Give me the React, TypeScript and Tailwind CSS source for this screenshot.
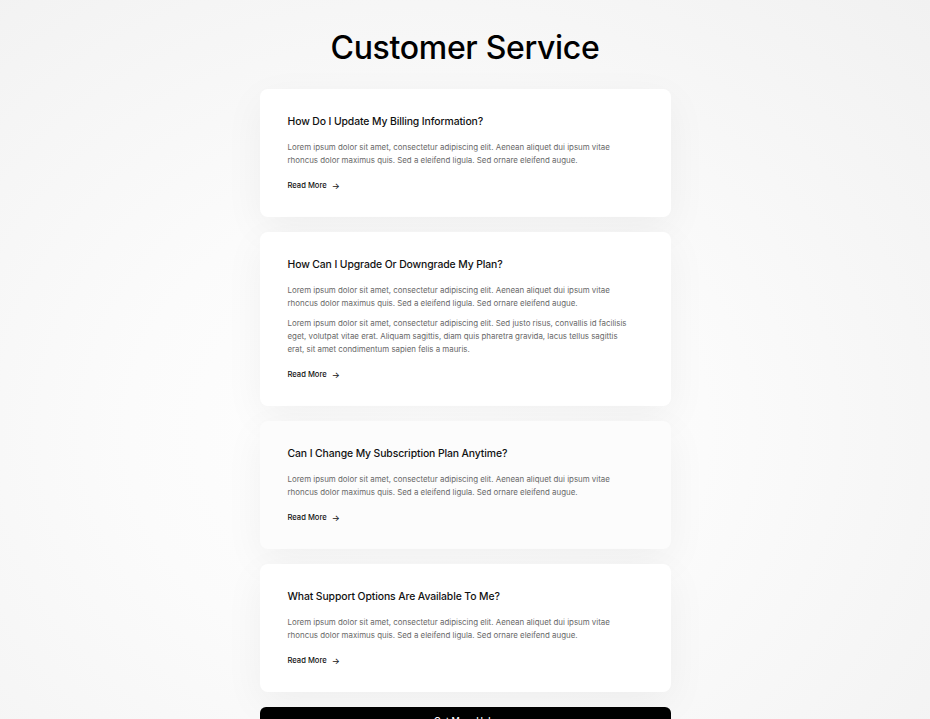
import React from 'react';

const p1 =
  'Lorem ipsum dolor sit amet, consectetur adipiscing elit. Aenean aliquet dui ipsum vitae rhoncus dolor maximus quis. Sed a eleifend ligula. Sed ornare eleifend augue.';
const p2 =
  'Lorem ipsum dolor sit amet, consectetur adipiscing elit. Sed justo risus, convallis id facilisis eget, volutpat vitae erat. Aliquam sagittis, diam quis pharetra gravida, lacus tellus sagittis erat, sit amet condimentum sapien felis a mauris.';

interface Faq {
  title: string;
  paragraphs: string[];
  faded?: boolean;
}

const faqs: Faq[] = [
  { title: 'How Do I Update My Billing Information?', paragraphs: [p1] },
  { title: 'How Can I Upgrade Or Downgrade My Plan?', paragraphs: [p1, p2] },
  { title: 'Can I Change My Subscription Plan Anytime?', paragraphs: [p1], faded: true },
  { title: 'What Support Options Are Available To Me?', paragraphs: [p1] },
];

const FaqCard: React.FC<{ faq: Faq }> = ({ faq }) => (
  <div
    className={`rounded-lg px-7 pt-[26px] pb-[25px] shadow-[0_12px_40px_rgba(0,0,0,0.05)] ${
      faq.faded ? 'bg-[#fcfcfc]' : 'bg-white'
    }`}
  >
    <h3 className="text-[10.4px] leading-[13px] font-medium text-[#111] tracking-[-0.01em]">{faq.title}</h3>
    <div className="mt-[13px] flex flex-col gap-[7px] pr-[6px]">
      {faq.paragraphs.map((p, i) => (
        <p key={i} className="text-[7.9px] leading-[13px] text-[#686868]">
          {p}
        </p>
      ))}
    </div>
    <a className="mt-[13px] flex items-center gap-[5px] text-[7.6px] leading-[12px] font-medium text-[#111]">
      Read More <span className="text-[8.5px]">→</span>
    </a>
  </div>
);

export default function App() {
  return (
    <div
      className="min-h-screen h-[719px] overflow-hidden bg-[radial-gradient(ellipse_at_45%_60%,#ffffff_0%,#fbfbfb_40%,#f1f1f1_100%)]"
      style={{ fontFamily: 'Inter, "Noto Sans", sans-serif' }}
    >
      <div className="mx-auto w-[411px] pt-[28px] flex flex-col">
        <h1 className="text-center text-[32px] leading-[40px] font-medium text-black tracking-[-0.01em]">
          Customer Service
        </h1>
        <div className="mt-[21px] flex flex-col gap-[15px]">
          {faqs.map((f) => (
            <FaqCard key={f.title} faq={f} />
          ))}
          <button className="w-full rounded-md bg-black pt-[7px] pb-[9px] text-[9px] leading-[13px] font-medium text-white">
            Get More Help
          </button>
        </div>
      </div>
    </div>
  );
}
